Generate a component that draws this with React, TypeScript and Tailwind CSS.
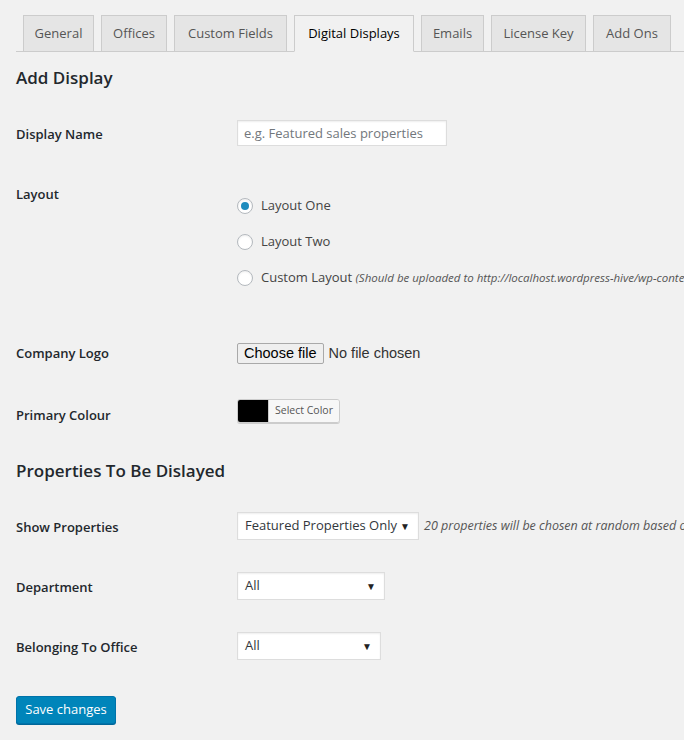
import React from "react";

const tabs = [
  { label: "General", w: "w-[71px]" },
  { label: "Offices", w: "w-[66px]" },
  { label: "Custom Fields", w: "w-[113px]" },
  { label: "Digital Displays", w: "w-[120px]", active: true },
  { label: "Emails", w: "w-[63px]" },
  { label: "License Key", w: "w-[95px]" },
  { label: "Add Ons", w: "w-[78px]" },
];

function Radio({ checked, children }: { checked?: boolean; children: React.ReactNode }) {
  return (
    <label className="flex items-center gap-2 h-5 whitespace-nowrap">
      <span className="w-4 h-4 rounded-full border border-[#b4b9be] bg-white shadow-[inset_0_1px_2px_rgba(0,0,0,0.07)] flex items-center justify-center shrink-0">
        {checked && <span className="w-2 h-2 rounded-full bg-[#1e8cbe]" />}
      </span>
      {children}
    </label>
  );
}

function Select({ value, w }: { value: string; w: string }) {
  return (
    <div
      className={`${w} h-[28px] bg-white border border-[#ddd] shadow-[inset_0_1px_2px_rgba(0,0,0,0.07)] flex items-center justify-between pl-[7px] pr-[8px] text-[13px] text-[#32373c] shrink-0`}
    >
      <span>{value}</span>
      <span className="text-[10px] text-[#222]">▼</span>
    </div>
  );
}

function Row({
  label,
  h,
  lpt,
  fpt,
  children,
}: {
  label: string;
  h: string;
  lpt: string;
  fpt: string;
  children: React.ReactNode;
}) {
  return (
    <div className={`flex ${h}`}>
      <div className={`w-[221px] shrink-0 ${lpt} font-semibold text-[13px] leading-5 text-[#23282d]`}>
        {label}
      </div>
      <div className={`flex-1 min-w-0 ${fpt}`}>{children}</div>
    </div>
  );
}

export default function App() {
  return (
    <div
      className="w-[684px] h-[740px] overflow-hidden bg-[#f1f1f1] pl-4 text-[#444]"
      style={{ fontFamily: '"Open Sans", "Noto Sans", sans-serif' }}
    >
      {/* Tabs */}
      <div className="pt-[15px] border-b border-[#ccc] flex gap-[7px] pl-[7px] whitespace-nowrap">
        {tabs.map((t) => (
          <div
            key={t.label}
            className={`${t.w} shrink-0 h-[37px] -mb-px border border-[#ccc] flex items-center justify-center text-[13px] font-medium ${
              t.active
                ? "bg-[#f1f1f1] border-b-[#f1f1f1] text-black"
                : "bg-[#e5e5e5] text-[#555]"
            }`}
          >
            {t.label}
          </div>
        ))}
      </div>

      <h2 className="mt-[14px] text-[17px] leading-6 font-semibold text-[#23282d]">Add Display</h2>

      <Row label="Display Name" h="h-[70px]" lpt="pt-[34px]" fpt="pt-[30px]">
        <div className="w-[210px] h-[26px] bg-white border border-[#ddd] shadow-[inset_0_1px_2px_rgba(0,0,0,0.07)] flex items-center px-[6px] pt-[1px] text-[13px] text-[#72777c]">
          e.g. Featured sales properties
        </div>
      </Row>

      <Row label="Layout" h="h-[160px]" lpt="pt-[24px]" fpt="pt-[36px]">
        <div className="flex flex-col gap-4 text-[13px] text-[#444]">
          <Radio checked>Layout One</Radio>
          <Radio>Layout Two</Radio>
          <Radio>
            <span>
              Custom Layout{" "}
              <em className="text-[11.5px] text-[#555]">
                (Should be uploaded to http://localhost.wordpress-hive/wp-content/uploads/propertyhive/digital-displays)
              </em>
            </span>
          </Radio>
        </div>
      </Row>

      <Row label="Company Logo" h="h-[60px]" lpt="pt-[23px]" fpt="pt-[23px]">
        <div className="flex items-center gap-[5px] text-[14.5px]" style={{ fontFamily: '"Liberation Sans", Arial, sans-serif' }}>
          <span className="h-[21px] px-[6px] flex items-center bg-[#efefef] border border-[#a9a9a9] rounded-[2px] text-black">
            Choose file
          </span>
          <span className="text-[#333]">No file chosen</span>
        </div>
      </Row>

      <Row label="Primary Colour" h="h-[60px]" lpt="pt-[25px]" fpt="pt-[19px]">
        <div className="w-[103px] h-[24px] flex border border-[#ccc] rounded-[3px] shadow-[0_1px_0_#ccc] overflow-hidden">
          <span className="w-[30px] bg-black shrink-0" />
          <span className="flex-1 bg-[#f7f7f7] border-l border-[#ccc] flex items-center justify-center text-[10.5px] text-[#555]">
            Select Color
          </span>
        </div>
      </Row>

      <h2 className="mt-[19px] text-[17px] leading-6 font-semibold text-[#23282d]">
        Properties To Be Dislayed
      </h2>

      <Row label="Show Properties" h="h-[67px]" lpt="pt-[34px]" fpt="pt-[29px]">
        <div className="flex items-center gap-[5px] whitespace-nowrap">
          <Select value="Featured Properties Only" w="w-[182px]" />
          <em className="text-[12.5px] text-[#555]">
            20 properties will be chosen at random based on the criteria specified
          </em>
        </div>
      </Row>

      <Row label="Department" h="h-[60px]" lpt="pt-[27px]" fpt="pt-[22px]">
        <Select value="All" w="w-[148px]" />
      </Row>

      <Row label="Belonging To Office" h="h-[60px]" lpt="pt-[27px]" fpt="pt-[22px]">
        <Select value="All" w="w-[144px]" />
      </Row>

      <button className="mt-[26px] w-[100px] h-[28px] bg-[#0085ba] border border-[#0073aa] rounded-[3px] shadow-[0_1px_0_#006799] text-white text-[13px] flex items-center justify-center">
        Save changes
      </button>
    </div>
  );
}
